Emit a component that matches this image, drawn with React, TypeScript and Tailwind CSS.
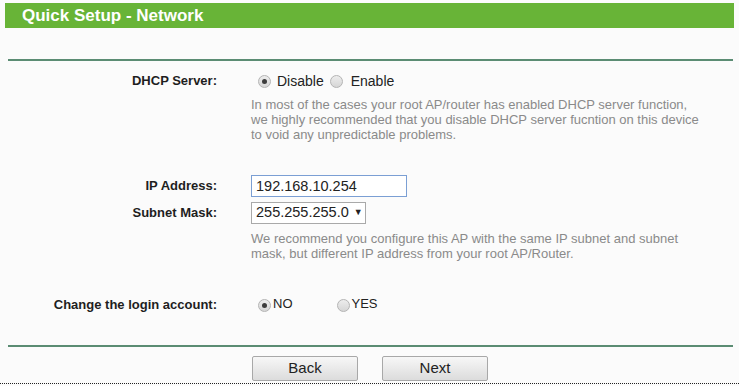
import { useState } from "react";

function Radio({ checked, onClick }: { checked: boolean; onClick: () => void }) {
    return (
        <span
            onClick={onClick}
            className="w-[13px] h-[13px] rounded-full border border-[#b4b4b4] bg-gradient-to-b from-[#ededed] to-[#d6d6d6] flex items-center justify-center cursor-pointer shrink-0"
        >
            {checked && <span className="w-[5px] h-[5px] rounded-full bg-[#3c3c3c]" />}
        </span>
    );
}

export default function App() {
    const [dhcp, setDhcp] = useState('disable');
    const [login, setLogin] = useState('no');
    const [ip, setIp] = useState('192.168.10.254');

    const label = "w-[217px] shrink-0 text-right text-[13px] font-bold text-[#1e1e1e]";
    const note = "text-[13px] leading-[15px] text-[#8a8a8a]";

    return (
        <div className="w-[739px] h-[386px] bg-[#fbfbfb] font-['Liberation_Sans',Arial,sans-serif] overflow-hidden flex flex-col">
            <div className="mt-[3px] mx-[5px] h-[25px] bg-[#68b437] pl-[17px] text-white text-[17px] font-bold leading-[25px]">
                Quick Setup - Network
            </div>
            <div className="mt-[31px] ml-[8px] mr-[6px] h-[2px] bg-[#5b8c73]" />

            <div className="mt-[11px] flex items-center h-[18px]">
                <div className={label}>DHCP Server:</div>
                <div className="ml-[41px] flex items-center text-[14px] text-[#222]">
                    <Radio checked={dhcp === 'disable'} onClick={() => setDhcp('disable')} />
                    <span className="ml-[6px]">Disable</span>
                    <span className="ml-[6px]"><Radio checked={dhcp === 'enable'} onClick={() => setDhcp('enable')} /></span>
                    <span className="ml-[8px]">Enable</span>
                </div>
            </div>
            <div className={`mt-[7px] ml-[251px] ${note}`}>
                In most of the cases your root AP/router has enabled DHCP server function,<br />
                we highly recommended that you disable DHCP server fucntion on this device<br />
                to void any unpredictable problems.
            </div>

            <div className="mt-[33px] flex items-center h-[22px]">
                <div className={label}>IP Address:</div>
                <input
                    type="text"
                    value={ip}
                    onChange={(e) => setIp(e.target.value)}
                    className="ml-[34px] w-[156px] h-[22px] px-[4px] border border-[#7b9fd4] bg-white text-[14.5px] text-[#222] outline-none"
                />
            </div>
            <div className="mt-[5px] flex items-center h-[22px]">
                <div className={label}>Subnet Mask:</div>
                <div className="ml-[34px] w-[115px] h-[22px] pl-[4px] border border-[#a9a9a9] bg-white text-[14.5px] text-[#222] flex items-center">
                    255.255.255.0
                    <span className="ml-[5px] text-[9px]">▼</span>
                </div>
            </div>
            <div className={`mt-[7px] ml-[251px] ${note}`}>
                We recommend you configure this AP with the same IP subnet and subnet<br />
                mask, but different IP address from your root AP/Router.
            </div>

            <div className="mt-[35px] flex items-center h-[18px]">
                <div className={label}>Change the login account:</div>
                <div className="ml-[41px] flex items-center text-[13px] text-[#222]">
                    <Radio checked={login === 'no'} onClick={() => setLogin('no')} />
                    <span className="ml-[2px] -mt-[3px]">NO</span>
                    <span className="ml-[44px]"><Radio checked={login === 'yes'} onClick={() => setLogin('yes')} /></span>
                    <span className="ml-[2px] -mt-[3px]">YES</span>
                </div>
            </div>

            <div className="mt-[31px] ml-[8px] mr-[6px] h-[2px] bg-[#5b8c73]" />

            <div className="mt-[9px] ml-[252px] flex gap-[24px]">
                <button className="w-[106px] h-[25px] border border-[#a8a8a8] rounded-[2px] bg-gradient-to-b from-[#f7f7f7] to-[#dcdcdc] text-[15px] text-[#222]">Back</button>
                <button className="w-[106px] h-[25px] border border-[#a8a8a8] rounded-[2px] bg-gradient-to-b from-[#f7f7f7] to-[#dcdcdc] text-[15px] text-[#222]">Next</button>
            </div>
            <div className="mt-[2px] border-t border-dotted border-[#222]" />
        </div>
    );
}
